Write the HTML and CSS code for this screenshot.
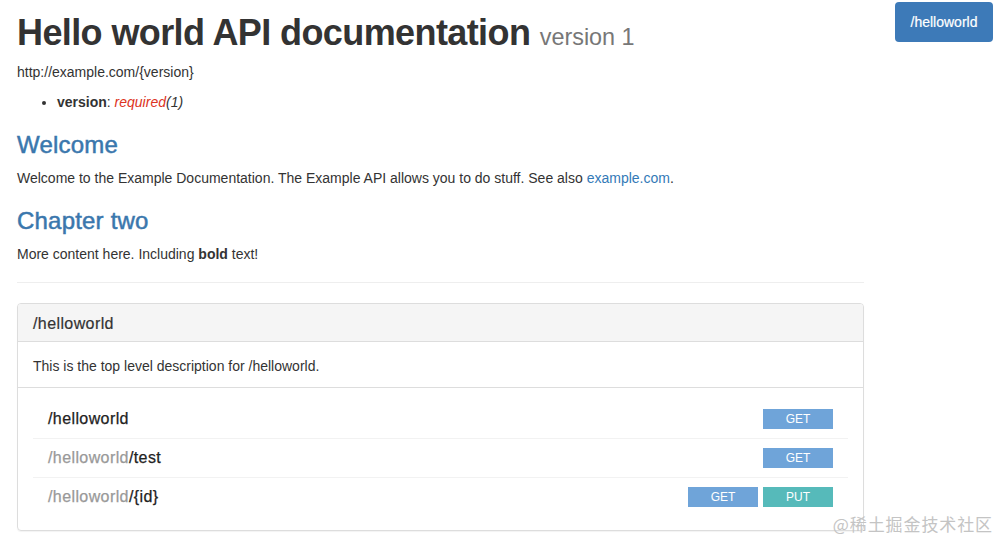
FILE: index.html
```html
<!DOCTYPE html>
<html>
<head>
<meta charset="utf-8">
<title>Hello world API documentation</title>
<link rel="stylesheet" href="styles.css">
</head>
<body>
<div class="page">
  <main class="content">
    <h1 class="title">Hello world API documentation <small>version 1</small></h1>
    <p class="base">http://example.com/{version}</p>
    <ul class="params">
      <li><strong>version</strong>: <em class="req">required</em><em>(1)</em></li>
    </ul>
    <h3 class="section">Welcome</h3>
    <p>Welcome to the Example Documentation. The Example API allows you to do stuff. See also <a href="#">example.com</a>.</p>
    <h3 class="section">Chapter two</h3>
    <p>More content here. Including <strong>bold</strong> text!</p>
    <hr class="rule">
    <div class="panel">
      <div class="panel-heading"><h3 class="panel-title">/helloworld</h3></div>
      <div class="panel-desc"><p>This is the top level description for /helloworld.</p></div>
      <div class="panel-body">
        <ul class="resources">
          <li class="res">
            <span class="res-name">/helloworld</span>
            <span class="methods"><span class="badge get">GET</span></span>
          </li>
          <li class="res">
            <span class="res-name"><span class="parent">/helloworld</span>/test</span>
            <span class="methods"><span class="badge get">GET</span></span>
          </li>
          <li class="res">
            <span class="res-name"><span class="parent">/helloworld</span>/{id}</span>
            <span class="methods"><span class="badge get">GET</span><span class="badge put">PUT</span></span>
          </li>
        </ul>
      </div>
    </div>
  </main>
  <aside class="sidebar">
    <a class="nav-btn" href="#">/helloworld</a>
  </aside>
</div>
<div class="watermark">@稀土掘金技术社区</div>
</body>
</html>
```
FILE: styles.css
```css
* { box-sizing: border-box; }
html, body {
  margin: 0;
  padding: 0;
  background: #fff;
}
body {
  font-family: "Liberation Sans", Arial, "Noto Sans CJK SC", sans-serif;
  font-size: 14px;
  line-height: 20px;
  color: #333;
  width: 999px;
  height: 541px;
  overflow: hidden;
  position: relative;
}
.page {
  display: flex;
  padding-left: 17px;
}
.content {
  width: 847px;
  flex: none;
}
.sidebar {
  flex: 1;
  display: flex;
  justify-content: flex-end;
  align-items: flex-start;
  padding: 2px 6px 0 0;
}
.nav-btn {
  display: block;
  width: 98px;
  height: 40px;
  line-height: 40px;
  text-align: center;
  background: #3d7ab8;
  color: #fff;
  border-radius: 4px;
  text-decoration: none;
  font-size: 14px;
  -webkit-text-stroke: 0.2px #fff;
}
.title {
  font-size: 36px;
  line-height: 40px;
  font-weight: 700;
  letter-spacing: -0.6px;
  margin: 13px 0 5px;
  color: #333;
}
.title small {
  font-size: 23.4px;
  color: #777;
  font-weight: 400;
  letter-spacing: 0;
}
p { margin: 0 0 10px; }
.params {
  margin: 0 0 10px;
  padding-left: 40px;
}
.params strong { font-weight: 700; }
.req { color: #dd3322; }
.section {
  font-size: 24px;
  line-height: 26px;
  font-weight: 400;
  -webkit-text-stroke: 0.5px #3a77ad;
  letter-spacing: 0.2px;
  color: #3a77ad;
  margin: 20px 0 10px;
}
a { color: #337ab7; text-decoration: none; }
.rule {
  border: 0;
  border-top: 1px solid #eee;
  margin: 18px 0 20px;
  height: 0;
}
.panel {
  border: 1px solid #ddd;
  border-radius: 4px;
  box-shadow: 0 1px 1px rgba(0,0,0,0.05);
}
.panel-heading {
  background: #f5f5f5;
  border-bottom: 1px solid #ddd;
  padding: 11px 15px 9px;
  border-radius: 3px 3px 0 0;
}
.panel-title {
  margin: 0;
  font-size: 16px;
  line-height: 17px;
  font-weight: 400;
  letter-spacing: 0.4px;
  -webkit-text-stroke: 0.2px #333;
  color: #333;
}
.panel-desc {
  padding: 14px 15px 11px;
  border-bottom: 1px solid #ddd;
}
.panel-desc p { margin: 0; }
.panel-body {
  padding: 12px 15px 14px;
}
.resources {
  list-style: none;
  margin: 0;
  padding: 0;
}
.res {
  display: flex;
  align-items: center;
  justify-content: space-between;
  padding: 10px 15px 10px 15px;
  height: 39px;
  border-bottom: 1px solid #f2f2f2;
}
.res:last-child { border-bottom: 0; height: 38px; }
.res-name {
  font-size: 16px;
  font-weight: 400;
  letter-spacing: 0.4px;
  -webkit-text-stroke: 0.25px currentColor;
  color: #222;
}
.parent { color: #999; }
.methods {
  display: flex;
  gap: 5px;
}
.badge {
  display: block;
  width: 70px;
  height: 20px;
  line-height: 20px;
  text-align: center;
  color: #fff;
  font-size: 12px;
}
.get { background: #6fa4d9; }
.put { background: #56baba; }
.watermark {
  position: absolute;
  right: 6px;
  bottom: 6px;
  font-family: "Noto Sans CJK SC", sans-serif;
  font-size: 17px;
  line-height: 22px;
  color: #c4c4c4;
  letter-spacing: 0.9px;
}
```
